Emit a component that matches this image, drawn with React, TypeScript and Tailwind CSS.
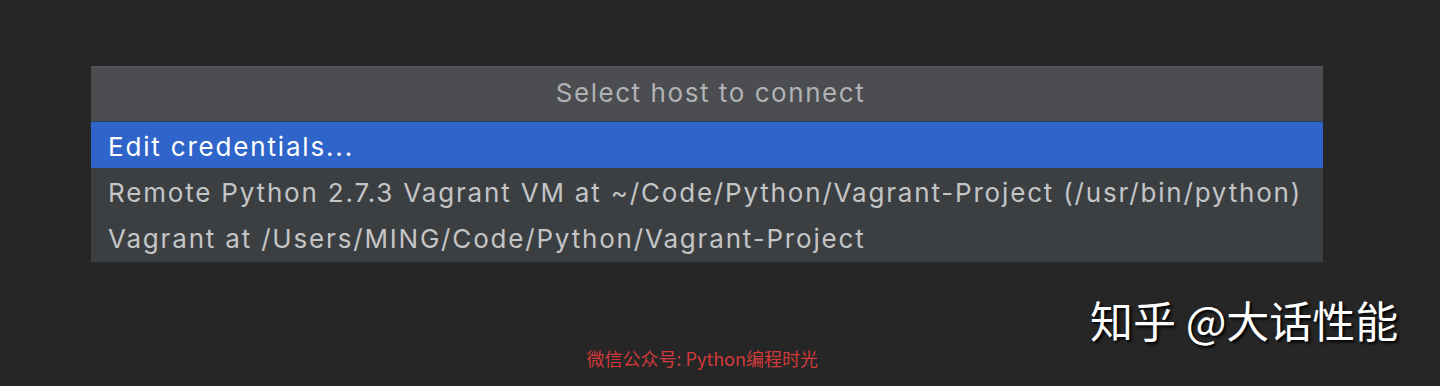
export default function App() {
  const rows = [
    'Remote Python 2.7.3 Vagrant VM at ~/Code/Python/Vagrant-Project (/usr/bin/python)',
    'Vagrant at /Users/MING/Code/Python/Vagrant-Project',
  ]

  return (
    <div className="w-[1440px] h-[386px] bg-[#262626] pt-[66px] pl-[91px] font-['Inter',sans-serif]">
      {/* Popup */}
      <div className="w-[1232px] bg-[#3c3f41] border-b border-[#2b2b2b] pb-[2px]">
        <div className="h-[56px] bg-[#4b4d50] border-t border-[#55585b] border-b border-b-[#2c3e5e] flex items-center justify-center pl-[7px] pb-[3px] text-[26px] tracking-[0.06em] text-[#b0b2b4]">
          Select host to connect
        </div>
        <div className="h-[46px] bg-[#2f65ca] flex items-center pl-[17px] pt-[3px] text-[26px] tracking-[0.07em] text-white">
          Edit credentials...
        </div>
        {rows.map((r) => (
          <div
            key={r}
            className="h-[46px] flex items-center pl-[17px] pt-[3px] text-[26px] tracking-[0.07em] text-[#c4c5c7]"
          >
            {r}
          </div>
        ))}
      </div>

      {/* Watermarks */}
      <div className="flex items-start">
        <div className="w-[727px] pt-[82px] text-right text-[18px] text-[#d03a3a] font-['Noto_Sans_CJK_SC',sans-serif]">
          微信公众号: Python编程时光
        </div>
        <div className="ml-[272px] pt-[24px] text-[43px] text-white font-['Noto_Sans_CJK_SC',sans-serif] [text-shadow:2px_2px_3px_#000]">
          知乎 @大话性能
        </div>
      </div>
    </div>
  )
}
